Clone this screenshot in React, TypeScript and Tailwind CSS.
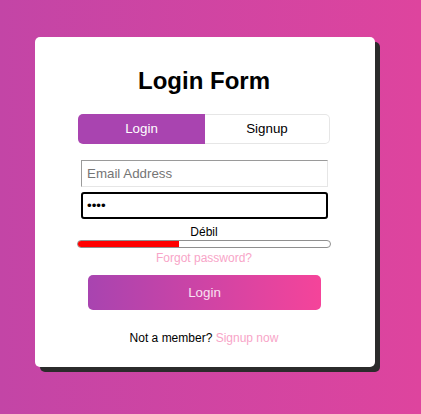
import React from "react";

export default function App() {
  return (
    <div className="h-screen w-full overflow-hidden bg-[linear-gradient(to_right,#c345a6,#de449e)] pl-[35px] pt-[37px] font-['Liberation_Sans',Arial,sans-serif]">
      <div className="flex h-[330px] w-[340px] flex-col rounded-[5px] bg-white pl-[42px] pr-[44px] pt-[30px] shadow-[5px_5px_0_#2b2b2b]">
        <h1 className="h-[28px] text-center text-[24px] font-bold leading-[28px] text-black">Login Form</h1>

        <div className="ml-[1px] mt-[19px] flex h-[30px] w-[252px] text-[13.33px]">
          <div className="flex w-[127px] items-center justify-center rounded-l-[5px] bg-[#a944b0] text-white">Login</div>
          <div className="flex w-[125px] items-center justify-center rounded-r-[5px] border border-l-0 border-[#e6e6e6] text-black">Signup</div>
        </div>

        <input
          type="text"
          placeholder="Email Address"
          className="ml-[4px] mt-[16px] h-[27px] w-[247px] border border-b-[#e6e6e6] border-l-[#9a9a9a] border-r-[#e6e6e6] border-t-[#9a9a9a] pl-[5px] text-[13.33px] text-black outline-none placeholder:text-[#757575]"
        />
        <input
          type="password"
          readOnly
          value="abcd"
          className="ml-[4px] mt-[5px] h-[27px] w-[247px] rounded-[3px] border-2 border-black pl-[4px] text-[13.33px] text-black outline-none"
        />

        <div className="mt-[6px] text-center text-[12px] leading-[14px] text-black">Débil</div>
        <div className="mt-[1px] h-[8px] w-[254px] overflow-hidden rounded-full border border-[#8f8f8f] bg-white">
          <div className="h-full w-[40%] bg-[#ff0000]" />
        </div>
        <div className="mt-[3px] text-center text-[12px] leading-[14px] text-[#f8a5c8]">Forgot password?</div>

        <button className="ml-[11px] mt-[10px] h-[35px] w-[233px] rounded-[5px] bg-[linear-gradient(to_right,#a844b0,#f5449a)] text-[13.33px] text-white/85">
          Login
        </button>

        <div className="mt-[21px] text-center text-[12px] leading-[14px] text-black">
          Not a member? <span className="text-[#f8a5c8]">Signup now</span>
        </div>
      </div>
    </div>
  );
}
